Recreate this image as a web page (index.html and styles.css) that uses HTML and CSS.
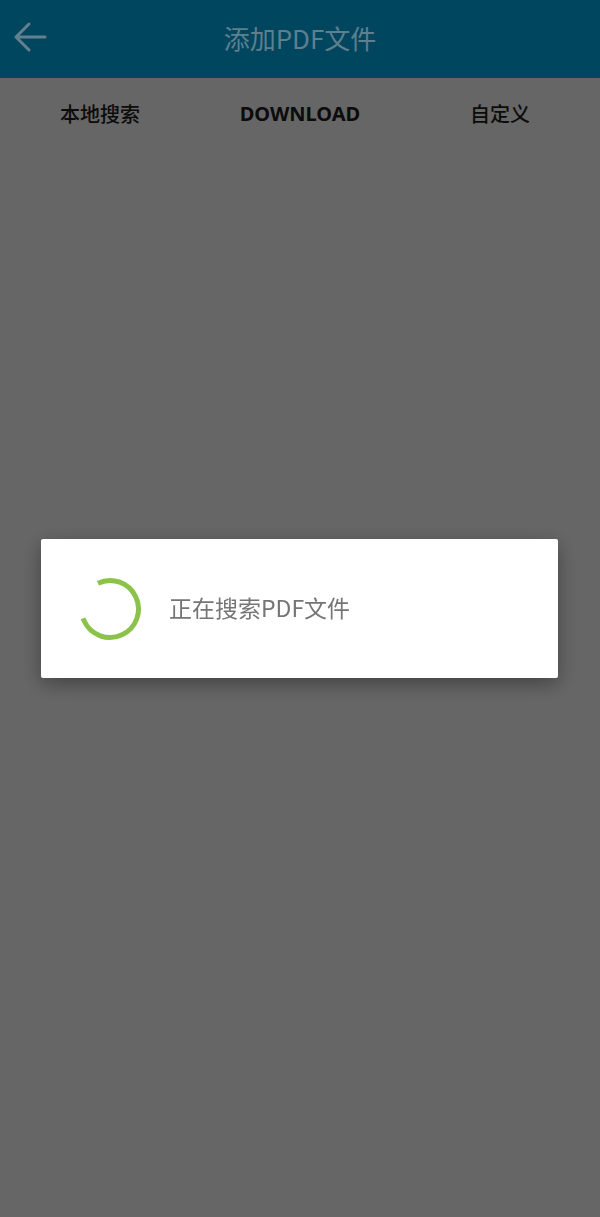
FILE: index.html
```html
<!DOCTYPE html>
<html lang="zh-CN">

<head>
    <meta charset="UTF-8">
    <meta name="viewport" content="width=device-width, initial-scale=1.0">
    <title>添加PDF文件</title>
    <link rel="stylesheet" href="styles.css">
</head>

<body>
    <div class="app-bar">
        <button class="back-btn" aria-label="返回">
            <svg width="34" height="32" viewBox="0 0 34 32">
                <path d="M32 16H3M16 3L3 16l13 13" fill="none" stroke="currentColor" stroke-width="3" stroke-linecap="round" stroke-linejoin="round"/>
            </svg>
        </button>
        <h1 class="title">添加PDF文件</h1>
    </div>

    <div class="tabs">
        <div class="tab">本地搜索</div>
        <div class="tab tab-active">DOWNLOAD</div>
        <div class="tab">自定义</div>
    </div>

    <div class="content">
    </div>

    <div class="mask">
        <div class="dialog">
            <svg class="spinner" width="66" height="66" viewBox="0 0 66 66">
                <circle cx="33" cy="33" r="28.5" fill="none" stroke="#8bc34a" stroke-width="5"
                    stroke-dasharray="137 200" transform="rotate(-115 33 33)"/>
            </svg>
            <div class="dialog-text">正在搜索PDF文件</div>
        </div>
    </div>
</body>

</html>
```

FILE: styles.css
```css
body {
    margin: 0;
    height: 1217px;
    font-family: "Noto Sans CJK SC", "Noto Sans", sans-serif;
    background-color: #fff;
    display: flex;
    flex-direction: column;
}

/* the bar keeps its own dimmed colours, the mask only covers the page below */
.app-bar {
    height: 78px;
    background-color: #00465f;
    display: flex;
    align-items: center;
    position: relative;
    z-index: 2;
}

.back-btn {
    background: none;
    border: none;
    padding: 0;
    margin-left: 13px;
    margin-top: -4px;
    color: #62808f;
    display: flex;
}

.title {
    position: absolute;
    left: 0;
    right: 0;
    top: 0;
    bottom: 0;
    margin: 0;
    display: flex;
    align-items: center;
    justify-content: center;
    font-size: 26px;
    font-weight: normal;
    color: #5f7f8e;
    pointer-events: none;
    padding-bottom: 3px;
}

.tabs {
    display: grid;
    grid-template-columns: repeat(3, 1fr);
    height: 72px;
}

.tab {
    display: flex;
    align-items: center;
    justify-content: center;
    font-size: 20px;
    font-weight: 500;
    color: #202020;
    padding-bottom: 2px;
}

.tab-active {
    font-weight: bold;
    font-family: "Noto Sans", sans-serif;
}

.content {
    flex: 1;
}

.mask {
    position: fixed;
    inset: 0;
    background-color: rgba(0, 0, 0, 0.6);
    display: flex;
    align-items: center;
    justify-content: center;
}

.dialog {
    width: 517px;
    height: 139px;
    margin-top: -1px;
    margin-right: 1px;
    background-color: #fff;
    border-radius: 2px;
    box-shadow: 0 6px 20px rgba(0, 0, 0, 0.35);
    display: flex;
    align-items: center;
    box-sizing: border-box;
    padding-left: 36px;
}

.spinner {
    margin-right: 26px;
    margin-top: 1px;
}

.dialog-text {
    font-size: 23px;
    color: #757575;
    padding-bottom: 2px;
}
```
